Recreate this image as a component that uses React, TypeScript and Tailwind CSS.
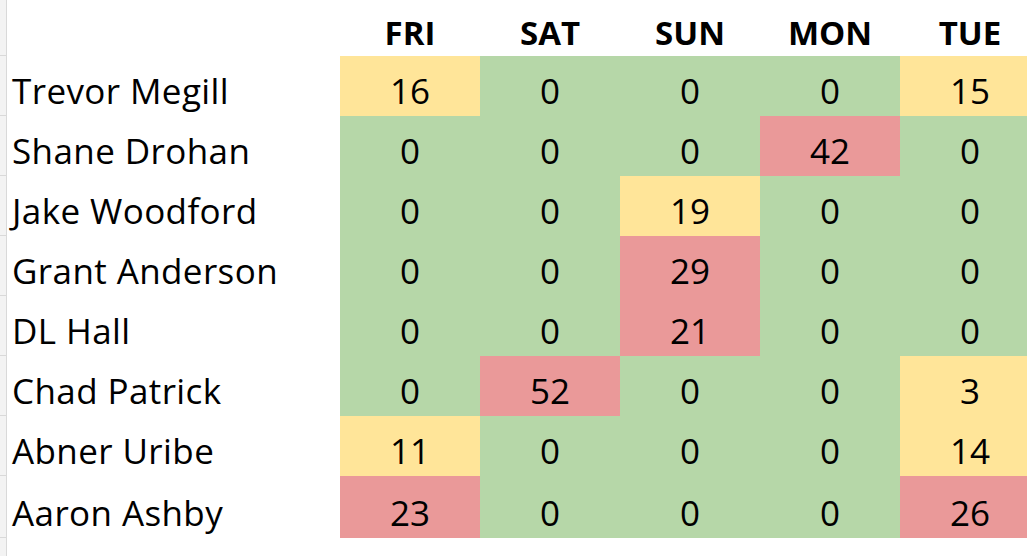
import React from "react";

type Row = { name: string; vals: number[] };

const rows: Row[] = [
  { name: "Trevor Megill", vals: [16, 0, 0, 0, 15] },
  { name: "Shane Drohan", vals: [0, 0, 0, 42, 0] },
  { name: "Jake Woodford", vals: [0, 0, 19, 0, 0] },
  { name: "Grant Anderson", vals: [0, 0, 29, 0, 0] },
  { name: "DL Hall", vals: [0, 0, 21, 0, 0] },
  { name: "Chad Patrick", vals: [0, 52, 0, 0, 3] },
  { name: "Abner Uribe", vals: [11, 0, 0, 0, 14] },
  { name: "Aaron Ashby", vals: [23, 0, 0, 0, 26] },
];

const days = ["FRI", "SAT", "SUN", "MON", "TUE"];

function cellBg(v: number) {
  if (v === 0) return "bg-[#b6d7a8]";
  if (v < 20) return "bg-[#ffe599]";
  return "bg-[#ea9999]";
}

export default function App() {
  return (
    <div
      className="w-[1027px] h-[556px] overflow-hidden bg-white text-black"
      style={{ fontFamily: '"Open Sans", "Noto Sans", sans-serif' }}
    >
      <div className="flex h-[56px]">
        <div className="w-[7px] shrink-0 bg-[#f3f3f3] border-r border-b border-[#d9d9d9]" />
        <div className="w-[333px] shrink-0" />
        {days.map((d) => (
          <div
            key={d}
            className="w-[140px] shrink-0 flex items-end justify-center pb-[7px] text-[33px] font-bold leading-none"
          >
            {d}
          </div>
        ))}
      </div>
      {rows.map((r, i) => (
        <div key={r.name} className={`flex ${i === rows.length - 1 ? "h-[62px]" : "h-[60px]"}`}>
          <div className="w-[7px] shrink-0 bg-[#f3f3f3] border-r border-b border-[#d9d9d9]" />
          <div className="w-[333px] shrink-0 flex items-end pl-[5px] pb-[8px] text-[35px] leading-none tracking-[0.4px]">
            {r.name}
          </div>
          {r.vals.map((v, j) => (
            <div
              key={j}
              className={`w-[140px] shrink-0 flex items-end justify-center pb-[8px] text-[35px] leading-none ${cellBg(v)}`}
            >
              {v}
            </div>
          ))}
        </div>
      ))}
      <div className="flex h-[20px]">
        <div className="w-[7px] shrink-0 bg-[#f3f3f3] border-r border-[#d9d9d9]" />
      </div>
    </div>
  );
}
